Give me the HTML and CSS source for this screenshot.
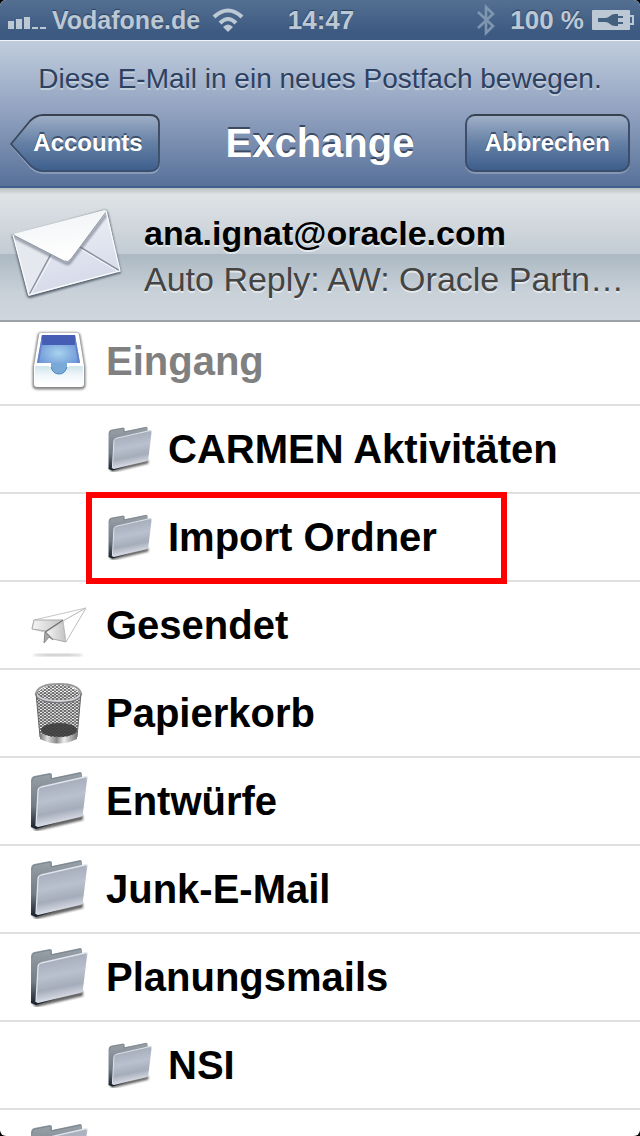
FILE: index.html
```html
<!DOCTYPE html>
<html lang="de">
    <head>
        <meta charset="utf-8">
        <meta name="viewport" content="width=device-width">
        <title>Exchange</title>
        <link rel="stylesheet" href="styles.css">
    </head>
    <body>
        <svg class="defs" width="0" height="0" aria-hidden="true">
            <defs>
                <linearGradient id="folder-back" x1="0" y1="0" x2="0" y2="1">
                    <stop offset="0" stop-color="#9aa2a9" />
                    <stop offset=".6" stop-color="#727c86" />
                    <stop offset="1" stop-color="#151d28" />
                </linearGradient>
                <linearGradient id="folder-front" x1="0" y1="0" x2=".2" y2="1">
                    <stop offset="0" stop-color="#9ca3b0" />
                    <stop offset=".5" stop-color="#b9c0ce" />
                    <stop offset=".75" stop-color="#a5acba" />
                    <stop offset="1" stop-color="#e0e4ec" />
                </linearGradient>
                <filter id="soft" x="-20%" y="-50%" width="140%" height="200%">
                    <feGaussianBlur stdDeviation="1.2" />
                </filter>
            </defs>
            <symbol id="folder" viewBox="0 0 60 60">
                <path d="M2 55 L7 60 L54 49 L54 44 Z" fill="#222" opacity=".7" filter="url(#soft)" />
                <path d="M2 56 V10 Q2 6 5 5 L21 2 Q23 2 23 4 V7 L51 1 Q53 1 53 3 V44 L7 58 Z" fill="url(#folder-back)" />
                <path d="M3 11 Q3 6 6 6 L21 3 Q22 3 22 5 V8 L52 2" fill="none" stroke="#7b868d" stroke-width="1" />
                <path d="M9 20 Q9 17 12 16 L56 6 Q59 5 58 9 L54 42 Q54 45 51 46 L9 56 Q7 56 7 54 Z" fill="url(#folder-front)" />
                <path d="M7 55 L9 20 Q9 17 12 16 L56 6 Q59 5 58 9" fill="none" stroke="#dfe3eb" stroke-width="1.3" />
            </symbol>
        </svg>

        <div class="screen">
            <div class="statusbar">
                <div class="status-left">
                    <svg width="38" height="12" viewBox="0 0 38 12" aria-hidden="true">
                        <path d="M0 4h6v8H0zM8 2h6v10H8zM16 0h6v12h-6zM24 10h6v2h-6zM32 10h6v2h-6z" fill="#bdc8d5" />
                    </svg>
                    <span class="carrier">Vodafone.de</span>
                    <svg class="wifi" width="32" height="24" viewBox="0 0 32 24" aria-hidden="true">
                        <g fill="none" stroke="#bdc8d5" stroke-width="4">
                            <path d="M2 9 Q16 -4 30 9" />
                            <path d="M8 15 Q16 7 24 15" />
                        </g>
                        <path d="M11 19 Q16 14 21 19 L16 24 Z" fill="#bdc8d5" />
                    </svg>
                </div>
                <span class="time">14:47</span>
                <div class="status-right">
                    <svg width="18" height="32" viewBox="0 0 18 32" aria-hidden="true">
                        <path d="M1 8 L16 22 L9 29 V3 L16 10 L1 24" fill="none" stroke="#7f96b1" stroke-width="2.6" />
                    </svg>
                    <span class="percent">100 %</span>
                    <svg class="battery" width="42" height="20" viewBox="0 0 42 20" aria-hidden="true">
                        <rect width="38" height="20" rx="1" fill="#bdc8d5" />
                        <path d="M38 6h3v8h-3" fill="none" stroke="#bdc8d5" stroke-width="2" />
                        <path d="M6 8 H13 Q16 8 18 6 Q20 4 23 4 H26 V6 H31 V8 H26 V12 H31 V14 H26 V16 H23 Q20 16 18 14 Q16 12 13 12 H6 Z" fill="#44607f" />
                    </svg>
                </div>
            </div>

            <header class="navbar">
                <p class="prompt">Diese E-Mail in ein neues Postfach bewegen.</p>
                <div class="nav-row">
                    <button type="button" class="btn btn-back">
                        <svg class="btn-shape" viewBox="0 0 150 60" aria-hidden="true">
                            <defs>
                                <linearGradient id="btn-fill" x1="0" y1="0" x2="0" y2="1">
                                    <stop offset="0" stop-color="#9fafc7" />
                                    <stop offset=".5" stop-color="#6580a5" />
                                    <stop offset="1" stop-color="#3d5e8c" />
                                </linearGradient>
                                <linearGradient id="btn-line" x1="0" y1="0" x2="0" y2="1">
                                    <stop offset="0" stop-color="#38424f" />
                                    <stop offset="1" stop-color="#3b4f70" />
                                </linearGradient>
                            </defs>
                            <path d="M1 31 L20 8 Q26 2 33 2 H140 Q149 2 149 11 V50 Q149 59 140 59 H33 Q27 59 21 54 Z" fill="none" stroke="#93a5c0" stroke-width="1.5" />
                            <path d="M1 30 L20 7 Q26 1 33 1 H140 Q149 1 149 10 V48 Q149 57 140 57 H33 Q27 57 21 52 Z" fill="url(#btn-fill)" stroke="url(#btn-line)" stroke-width="1.8" />
                        </svg>
                        <span class="btn-label">Accounts</span>
                    </button>
                    <h1>Exchange</h1>
                    <button type="button" class="btn btn-cancel">Abbrechen</button>
                </div>
            </header>

            <section class="message">
                <svg class="envelope" width="116" height="96" viewBox="0 0 116 96" aria-hidden="true">
                    <defs>
                        <linearGradient id="paper" x1="0" y1="0" x2=".3" y2="1">
                            <stop offset="0" stop-color="#f2f4f7" />
                            <stop offset="1" stop-color="#d5daea" />
                        </linearGradient>
                        <linearGradient id="flap" x1="0" y1="0" x2=".2" y2="1">
                            <stop offset="0" stop-color="#f0f2f4" />
                            <stop offset="1" stop-color="#ffffff" />
                        </linearGradient>
                    </defs>
                    <path d="M4 30 L97 4 Q99 4 100 7 L113 67 L22 92 Q20 92 19 90 Z" fill="#2d3847" opacity=".75" filter="url(#soft)" />
                    <path d="M5 29 L97 4 Q98 4 99 6 L112 65 L21 90 L20 89 Z" fill="url(#paper)" />
                    <path d="M5 29 L21 89 L44 49 Z" fill="#e5e8ee" />
                    <path d="M21 89 L43 48 M112 65 L72 41" fill="none" stroke="#8a92a2" stroke-width="1.5" />
                    <path d="M23 88 L45 49 M111 66 L71 42" fill="none" stroke="#f8f9fc" stroke-width="1" />
                    <path d="M4 30 L57 57 Q61 59 63 55 L99 8" fill="none" stroke="#606978" stroke-width="2.5" opacity=".7" filter="url(#soft)" />
                    <path d="M5 28 L97 4 L98 6 L63 53 Q60 57 56 55 Z" fill="url(#flap)" />
                    <path d="M5 29 L56 55 Q60 57 63 53 L98 6" fill="none" stroke="#8f97a3" stroke-width="1" />
                    <path d="M5 29 L21 89 L112 65 L98 5" fill="none" stroke="#f9fafc" stroke-width="1.3" />
                </svg>
                <div class="message-text">
                    <h2>ana.ignat@oracle.com</h2>
                    <p>Auto Reply: AW: Oracle Partn…</p>
                </div>
            </section>

            <ul class="mailboxes">
                <li class="mailbox disabled">
                    <svg class="icon" viewBox="0 0 60 60" aria-hidden="true">
                        <defs>
                            <radialGradient id="tray" cx=".5" cy=".65" r=".7">
                                <stop offset="0" stop-color="#a8d3ee" />
                                <stop offset="1" stop-color="#5b84cf" />
                            </radialGradient>
                            <linearGradient id="tray-front" x1="0" y1="0" x2="0" y2="1">
                                <stop offset="0" stop-color="#cfe5ec" />
                                <stop offset=".5" stop-color="#f0f7fa" />
                                <stop offset="1" stop-color="#fff" />
                            </linearGradient>
                        </defs>
                        <path d="M11 2 H48 Q51 2 51 5 L56 36 V55 Q56 58 52 58 H8 Q4 58 4 55 V36 L9 5 Q9 2 11 2 Z" fill="#333" stroke="#333" opacity=".6" filter="url(#soft)" />
                        <path d="M12 2 H48 Q50 2 50 4 L55 35 V53 Q55 56 52 56 H8 Q5 56 5 53 V35 L10 4 Q10 2 12 2 Z" fill="#fff" />
                        <path d="M13 4 H46 L51 32 H8 Z" fill="url(#tray)" />
                        <path d="M13 4 H46 V14 H12 Z" fill="#465db5" />
                        <path d="M13 4 L8 32 H10 L13 14 Z M46 4 L51 32 H49 L46 14 Z" fill="#6683cc" />
                        <path d="M6 35 H21 Q23 43 30 43 Q37 43 39 35 H54 V54 H6 Z" fill="url(#tray-front)" />
                        <path d="M22 32 H38 V36 Q36 43 30 43 Q24 43 22 36 Z" fill="#78a9d7" />
                        <path d="M22 36 Q24 43 30 43 Q36 43 38 36" fill="none" stroke="#4f84b8" stroke-width="1" />
                        <path d="M6 33 H21 V36 M54 33 H39 V36" fill="none" stroke="#fff" stroke-width="2" />
                    </svg>
                    <span>Eingang</span>
                </li>
                <li class="mailbox nested">
                    <svg class="icon icon-small" aria-hidden="true"><use href="#folder" /></svg>
                    <span>CARMEN Aktivitäten</span>
                </li>
                <li class="mailbox nested marked">
                    <svg class="icon icon-small" aria-hidden="true"><use href="#folder" /></svg>
                    <span>Import Ordner</span>
                </li>
                <li class="mailbox">
                    <svg class="icon" viewBox="0 0 60 60" aria-hidden="true">
                        <defs>
                            <linearGradient id="wing" x1="0" y1="0" x2="1" y2="0">
                                <stop offset="0" stop-color="#f5f5f5" />
                                <stop offset="1" stop-color="#c2c2c2" />
                            </linearGradient>
                        </defs>
                        <ellipse cx="29" cy="60" rx="25" ry="1" fill="#888" opacity=".6" filter="url(#soft)" />
                        <g stroke-width="1" stroke-linejoin="round">
                            <path d="M5 25 L57 13 L34 26 L16 37 L3 34 Z" fill="#fff" stroke="#c5c5c5" />
                            <path d="M5 25 L34 25 L17 36 L3 34 Z" fill="url(#wing)" stroke="#aaa" />
                            <path d="M17 37 L34 26 L37 47 L24 44 Z" fill="url(#wing)" stroke="#aaa" />
                            <path d="M37 47 L57 13 L34 26 Z" fill="#fff" stroke="#bdbdbd" />
                            <path d="M16 37 L15 48 L20 42 L24 45 Z" fill="#a9a9a9" stroke="#888" />
                            <path d="M16 37 L34 25" stroke="#666" />
                        </g>
                    </svg>
                    <span>Gesendet</span>
                </li>
                <li class="mailbox">
                    <svg class="icon icon-trash" viewBox="0 0 60 64" aria-hidden="true">
                        <defs>
                            <pattern id="mesh" width="4" height="3" patternUnits="userSpaceOnUse">
                                <path d="M0 0 L4 3 M4 0 L0 3" stroke="#3a3a3a" stroke-width=".8" />
                            </pattern>
                            <linearGradient id="metal" x1="0" y1="0" x2="1" y2="0">
                                <stop offset="0" stop-color="#777" />
                                <stop offset=".2" stop-color="#ddd" />
                                <stop offset=".45" stop-color="#888" />
                                <stop offset=".65" stop-color="#eee" />
                                <stop offset="1" stop-color="#777" />
                            </linearGradient>
                        </defs>
                        <path d="M7 12 L11 56 Q29 66 48 56 L52 12 Z" fill="#ddd" opacity=".6" />
                        <ellipse cx="30" cy="49" rx="18" ry="7" fill="#333" opacity=".85" />
                        <path d="M7 12 L11 56 Q29 66 48 56 L52 12 Q30 -6 7 12 Z" fill="url(#mesh)" />
                        <path d="M7 12 Q10 3 30 3 Q49 3 52 12" fill="none" stroke="#999" stroke-width="2" />
                        <path d="M7 12 Q10 21 30 21 Q49 21 52 12" fill="none" stroke="#77777c" stroke-width="3" />
                        <path d="M7 12 Q10 20 30 20 Q49 20 52 12" fill="none" stroke="#d2d2d8" stroke-width="2" />
                        <path d="M7 12 L11 56 M52 12 L48 56" stroke="#666" stroke-width="1" />
                        <path d="M11 52 Q29 61 48 52 L48 58 Q29 67 11 58 Z" fill="url(#metal)" />
                    </svg>
                    <span>Papierkorb</span>
                </li>
                <li class="mailbox">
                    <svg class="icon" aria-hidden="true"><use href="#folder" /></svg>
                    <span>Entwürfe</span>
                </li>
                <li class="mailbox">
                    <svg class="icon" aria-hidden="true"><use href="#folder" /></svg>
                    <span>Junk-E-Mail</span>
                </li>
                <li class="mailbox">
                    <svg class="icon" aria-hidden="true"><use href="#folder" /></svg>
                    <span>Planungsmails</span>
                </li>
                <li class="mailbox nested">
                    <svg class="icon icon-small" aria-hidden="true"><use href="#folder" /></svg>
                    <span>NSI</span>
                </li>
                <li class="mailbox">
                    <svg class="icon" aria-hidden="true"><use href="#folder" /></svg>
                </li>
            </ul>
        </div>
    </body>
</html>
```

FILE: styles.css
```css
*, *::after {
    box-sizing: border-box;
}
html, body {
    margin: 0;
    padding: 0;
    height: 100%;
}
body {
    background: #000;
    font-family: "Liberation Sans", Helvetica, Arial, sans-serif;
}
h1, h2, p, ul {
    margin: 0;
    padding: 0;
}
.defs {
    position: absolute;
}
.screen {
    display: flex;
    flex-direction: column;
    height: 100vh;
    overflow: hidden;
    border-radius: 6px;
    background: #fff;
}

/* status bar */
.statusbar {
    display: grid;
    grid-template-columns: 1fr auto 1fr;
    align-items: center;
    flex: none;
    height: 40px;
    padding: 0 6px 0 8px;
    background: linear-gradient(#546f91, #3d5a82 80%);
    color: #bdc8d5;
    font-size: 26px;
    font-weight: bold;
    text-shadow: 0 -1px 1px #2b415f;
}
.status-left, .status-right {
    display: flex;
    align-items: center;
}
.status-left {
    gap: 6px;
}
.status-left svg:first-child {
    margin-top: 6px;
}
.carrier {
    font-size: 25px;
}
.wifi {
    margin-left: 6px;
}
.status-right {
    justify-content: flex-end;
    gap: 8px;
}
.status-right svg:first-child {
    margin-right: 7px;
}

/* navigation bar */
.navbar {
    flex: none;
    height: 148px;
    padding: 20px 10px 0;
    border-top: 1px solid #f0f3f7;
    border-bottom: 2px solid #40608e;
    background: linear-gradient(#c0cddd, #90a1bf 50%, #587199);
}
.prompt {
    color: #2e4160;
    font-size: 28px;
    line-height: 36px;
    text-align: center;
    text-shadow: 0 2px 0 #c3cedd;
}
.nav-row {
    display: grid;
    grid-template-columns: 1fr auto 1fr;
    align-items: center;
    margin-top: 17px;
}
h1 {
    color: #fff;
    font-size: 40px;
    line-height: 58px;
    text-shadow: 0 -2px 0 #3a4a62;
}
.btn {
    height: 58px;
    color: #fff;
    font-family: inherit;
    font-size: 24px;
    font-weight: bold;
    text-shadow: 0 -2px 0 #3c4f6c;
}
.btn-back {
    position: relative;
    justify-self: start;
    width: 150px;
    padding: 0 17px 0 23px;
    border: 0;
    background: none;
}
.btn-shape {
    position: absolute;
    top: 0;
    left: 0;
    width: 100%;
}
.btn-label {
    position: relative;
}
.btn-cancel {
    justify-self: end;
    padding: 0 18px;
    border: 2px solid #3c4e6b;
    border-top-color: #38424f;
    border-radius: 10px;
    background: linear-gradient(#9fafc7, #6580a5 50%, #3d5e8c);
    box-shadow: 0 2px 0 #8497b5;
}

/* message being moved */
.message {
    display: flex;
    align-items: center;
    flex: none;
    gap: 20px;
    height: 134px;
    padding: 0 8px;
    border-bottom: 2px solid #9ea3aa;
    background: linear-gradient(#b9bec1, #dfe3e6 5%, #c3ccd4 50%, #acb9c2 50%, #c9d1d9 80%, #d0d6de);
}
.envelope {
    flex: none;
}
.message-text {
    min-width: 0;
    padding-top: 4px;
    white-space: nowrap;
    text-shadow: 0 2px 0 #e3e8ec;
}
.message-text h2, .message-text p {
    font-size: 34px;
    line-height: 46px;
}
.message-text p {
    color: #444;
}

/* mailbox list */
.mailboxes {
    flex: 1;
    overflow: hidden;
    list-style: none;
}
.mailbox {
    position: relative;
    display: flex;
    align-items: center;
    gap: 17px;
    height: 88px;
    padding-left: 29px;
    border-bottom: 2px solid #e0e0e0;
    font-size: 40px;
    font-weight: bold;
}
.mailbox:first-child {
    height: 84px;
    padding-bottom: 4px;
}
.nested {
    gap: 15px;
    padding-left: 107px;
}
.disabled {
    color: #808080;
}
.icon {
    flex: none;
    width: 60px;
    height: 60px;
    overflow: visible;
}
.icon-trash {
    height: 64px;
}
.icon-small {
    width: 46px;
    height: 46px;
}

/* frame drawn over the chosen mailbox */
.marked::after {
    content: "";
    position: absolute;
    top: -2px;
    left: 86px;
    width: 421px;
    height: 92px;
    border: 6px solid #f00;
    z-index: 1;
}
```
